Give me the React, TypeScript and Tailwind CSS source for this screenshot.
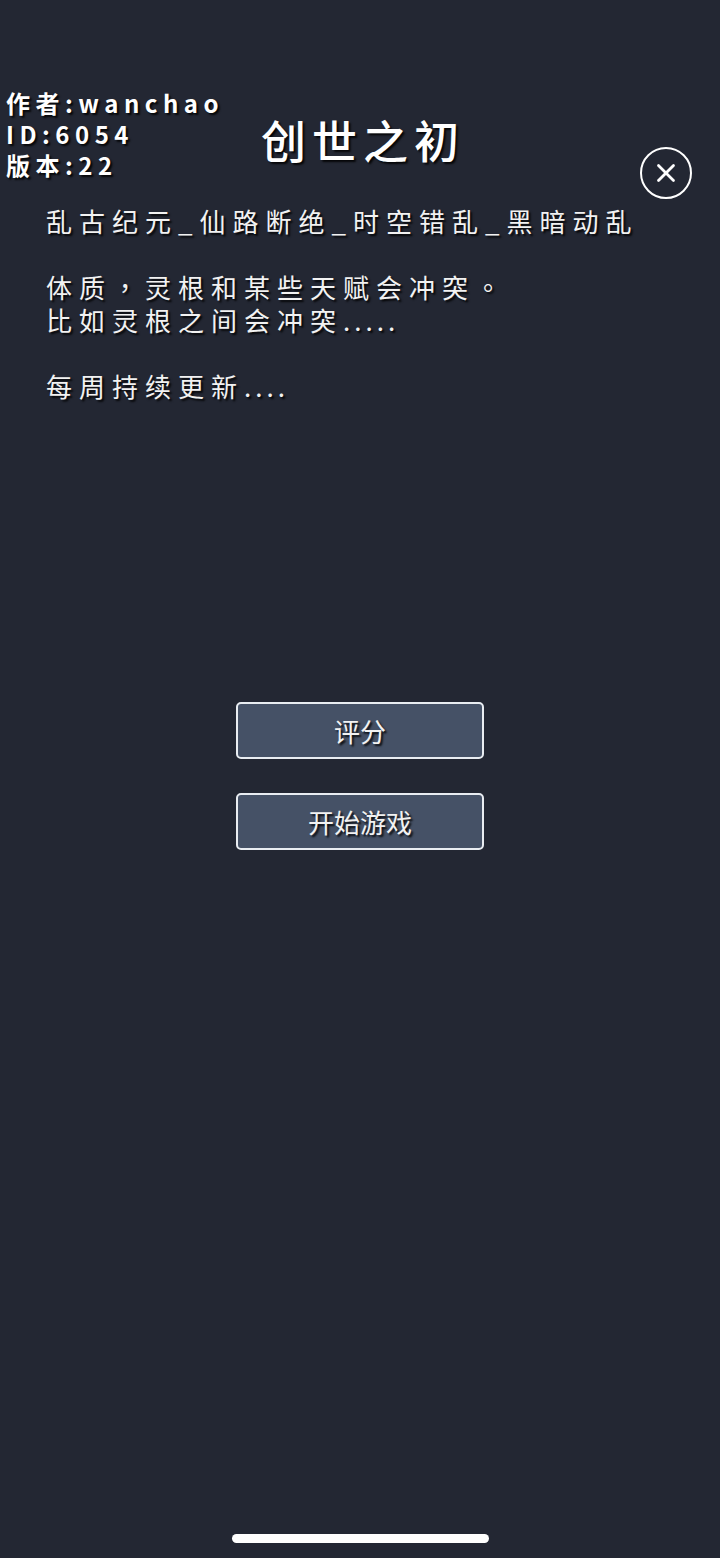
import { X } from 'lucide-react';

const CJK = "font-['Noto_Sans_CJK_SC','Noto_Sans',sans-serif]";
const CJK_TC = "font-['Noto_Sans_CJK_TC','Noto_Sans',sans-serif]";
const SHADOW = '[text-shadow:2px_2px_2px_rgba(0,0,0,0.85)]';

// Intro text of the world, one entry per line; empty strings are blank lines.
// Trailing dots are kept apart so they can sit tighter than the CJK glyphs.
const introLines: Array<[string, string]> = [
  ['乱古纪元_仙路断绝_时空错乱_黑暗动乱', ''],
  ['', ''],
  ['体质，灵根和某些天赋会冲突。', ''],
  ['比如灵根之间会冲突', '.....'],
  ['', ''],
  ['每周持续更新', '....'],
];

function MenuButton({ label }: { label: string }) {
  return (
    <button
      type="button"
      className={`flex h-[57px] w-[248px] items-center justify-center rounded-[5px] border-2 border-[#e9edf2] bg-[#455166] text-[26px] leading-none text-[#f2f2f2] ${SHADOW}`}
    >
      {label}
    </button>
  );
}

export default function App() {
  return (
    <div className={`flex min-h-[1558px] w-full flex-col bg-[#232733] text-white ${CJK}`}>
      <header className="grid grid-cols-[1fr_auto_1fr] pt-[87px]">
        <div className={`pl-[6px] text-[24px] font-bold leading-[31px] tracking-[5.5px] ${SHADOW}`}>
          <div>作者:wanchao</div>
          <div>ID:6054</div>
          <div>版本:22</div>
        </div>
        <h1 className={`pl-[6px] pt-[26px] text-[45px] font-medium leading-[54px] tracking-[6px] ${SHADOW}`}>创世之初</h1>
        <div className="flex justify-end pr-[28px] pt-[60px]">
          <button
            type="button"
            aria-label="关闭"
            className="flex h-[52px] w-[52px] items-center justify-center rounded-full border-2 border-white"
          >
            <X className="h-[30px] w-[30px]" strokeWidth={2.2} />
          </button>
        </div>
      </header>

      <div className={`mt-[5px] pl-[46px] text-[26px] leading-[33px] tracking-[7px] text-[#f2f2f2] ${CJK_TC} ${SHADOW}`}>
        {introLines.map(([text, dots], i) => (
          <p key={i} className="h-[33px] whitespace-pre">
            {text}
            {dots && <span className="tracking-[4px]">{dots}</span>}
          </p>
        ))}
      </div>

      <div className="mt-[300px] flex flex-col items-center gap-[34px]">
        <MenuButton label="评分" />
        <MenuButton label="开始游戏" />
      </div>

      <div className="mt-auto mb-[15px] flex justify-center">
        <div className="h-[9px] w-[257px] rounded-full bg-white" />
      </div>
    </div>
  );
}
